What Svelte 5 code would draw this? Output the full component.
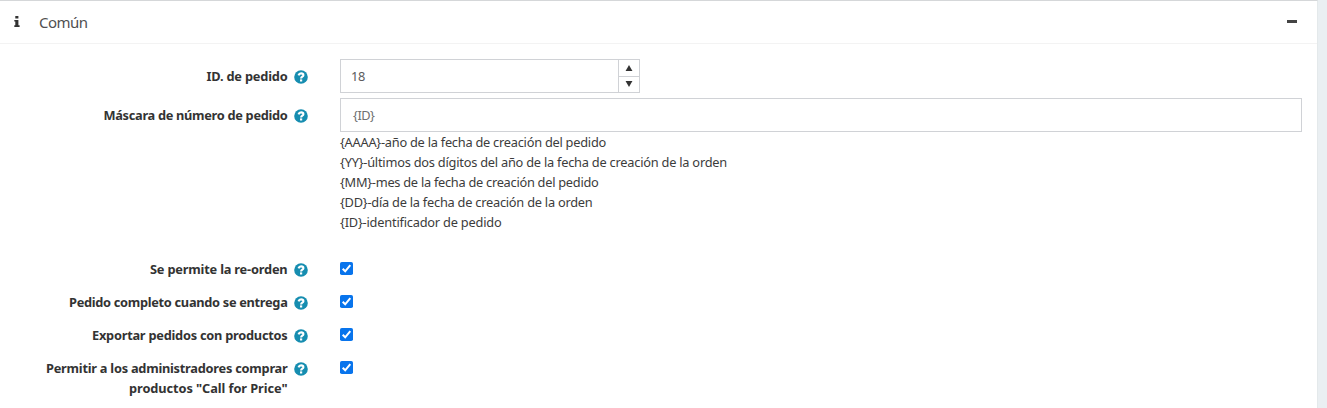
<script>
  const help = [
    ['{AAAA}-año de la fecha de creación del pedido', 266],
    ['{YY}-últimos dos dígitos del año de la fecha de creación de la orden', 387],
    ['{MM}-mes de la fecha de creación del pedido', 258.5],
    ['{DD}-día de la fecha de creación de la orden', 252.5],
    ['{ID}-identificador de pedido', 161.5]
  ];
  const options = [
    [['Se permite la re-orden', 137.5]],
    [['Pedido completo cuando se entrega', 218.5]],
    [['Exportar pedidos con productos', 195.5]],
    [['Permitir a los administradores comprar', 241.5], ['productos "Call for Price"', 158.5]]
  ];

  // Spreads the tracking so that a line takes the given measure.
  function fit(node, width) {
    const apply = () => {
      node.style.letterSpacing = '0px';
      const natural = node.getBoundingClientRect().width;
      node.style.letterSpacing = (width - natural) / node.textContent.length + 'px';
    };
    apply();
    document.fonts.ready.then(apply);
  }
</script>

{#snippet question()}
  <svg class="question" viewBox="0 0 14 14" aria-hidden="true">
    <circle cx="7" cy="7" r="6.8" fill="#168db0" />
    <path d="M4.5 5.3C5 3.9 5.9 3.4 7.1 3.4C8.5 3.4 9.4 4.2 9.4 5.2C9.4 6.8 7.1 6.6 7.1 8.5" fill="none" stroke="#fff" stroke-width="2.1" />
    <rect x="6" y="9.4" width="2.2" height="2.1" fill="#fff" />
  </svg>
{/snippet}

{#snippet label(lines)}
  <div class="label">
    <div class="lines">
      {#each lines as [text, width]}
        <div class="line"><span use:fit={width}>{text}</span></div>
      {/each}
    </div>
    {@render question()}
  </div>
{/snippet}

<section class="panel">
  <header>
    <svg class="info" viewBox="0 0 6 12" aria-hidden="true">
      <path d="M1.3 0H4.4V2.5H1.3ZM.3 4H4.4V9.3H5.6V11H.3V9.3H1.3V5.6H.3Z" fill="#333" />
    </svg>
    <h3><span use:fit={48.5}>Común</span></h3>
    <span class="minus"></span>
  </header>

  <div class="body">
    <div class="row number-row">
      {@render label([['ID. de pedido', 81]])}
      <div class="number">
        <span class="value"><span use:fit={14}>18</span></span>
        <div class="spin">
          <span><svg viewBox="0 0 8 7"><path d="M4 0L8 7H0Z" /></svg></span>
          <span><svg viewBox="0 0 8 7"><path d="M0 0H8L4 7Z" /></svg></span>
        </div>
      </div>
    </div>

    <div class="row mask-row">
      {@render label([['Máscara de número de pedido', 184]])}
      <div class="field">
        <div class="text"><span use:fit={21.5}>{'{ID}'}</span></div>
        {#each help as [text, width]}
          <div class="line"><span use:fit={width}>{text}</span></div>
        {/each}
      </div>
    </div>

    {#each options as lines}
      <div class="row option">
        {@render label(lines)}
        <svg class="check" viewBox="0 0 13 13" aria-hidden="true">
          <rect width="13" height="13" rx="1.8" fill="#0874ec" />
          <path d="M2.7 6.8L5.2 9.3L10.3 3.2" fill="none" stroke="#fff" stroke-width="2" />
        </svg>
      </div>
    {/each}
  </div>
</section>

<style>
  :global(body) {
    background: #eaeff2;
    overflow: hidden;
  }
  .panel {
    box-sizing: border-box;
    width: 1318px;
    height: 408px;
    overflow: hidden;
    background: #fff;
    border-top: 1px solid #d5d7d9;
    border-right: 1px solid #e4e9eb;
    font: 12.8px/20px "Noto Sans", sans-serif;
    color: #3c3c3c;
  }
  header {
    display: flex;
    align-items: center;
    box-sizing: border-box;
    height: 43px;
    padding: 0 20px 0 14px;
    border-bottom: 1px solid #f3f3f3;
  }
  .info {
    width: 6px;
    height: 12px;
  }
  h3 {
    margin: 0 0 0 19px;
    font-size: 15px;
    font-weight: 400;
    color: #505050;
  }
  .minus {
    width: 10px;
    height: 3px;
    margin-left: auto;
    margin-bottom: 2px;
    background: #444;
  }
  .body {
    padding-top: 15px;
  }
  .row {
    display: flex;
    align-items: flex-start;
  }
  .label {
    display: flex;
    align-items: flex-start;
    justify-content: flex-end;
    gap: 6.5px;
    width: 308px;
    margin-right: 32px;
    font-weight: 700;
    color: #333;
    text-align: right;
  }
  .line {
    height: 20px;
    white-space: nowrap;
  }
  .question {
    flex: none;
    width: 14px;
    height: 14px;
    margin-top: 3.5px;
  }
  .number-row > :global(.label),
  .mask-row > :global(.label) {
    padding-top: 7px;
  }
  .number-row {
    height: 39px;
  }
  .mask-row {
    height: 161px;
  }
  .number,
  .text {
    box-sizing: border-box;
    height: 34px;
    border: 1px solid #d0d2d6;
    color: #5c5c5c;
  }
  .number {
    display: flex;
    width: 300px;
  }
  .value {
    flex: 1;
    padding: 6px 0 0 10px;
  }
  .spin {
    display: flex;
    flex-direction: column;
    width: 20px;
    border-left: 1px solid #d0d2d6;
  }
  .spin span {
    display: flex;
    flex: 1;
    align-items: center;
    justify-content: center;
  }
  .spin span + span {
    border-top: 1px solid #d0d2d6;
  }
  .spin svg {
    width: 8px;
    height: 6px;
    fill: #333;
  }
  .field {
    width: 962px;
  }
  .text {
    padding: 6px 12px;
    color: #707070;
  }
  .option {
    margin-bottom: 13px;
  }
  .check {
    width: 13px;
    height: 13px;
    margin-top: 3px;
  }
</style>
